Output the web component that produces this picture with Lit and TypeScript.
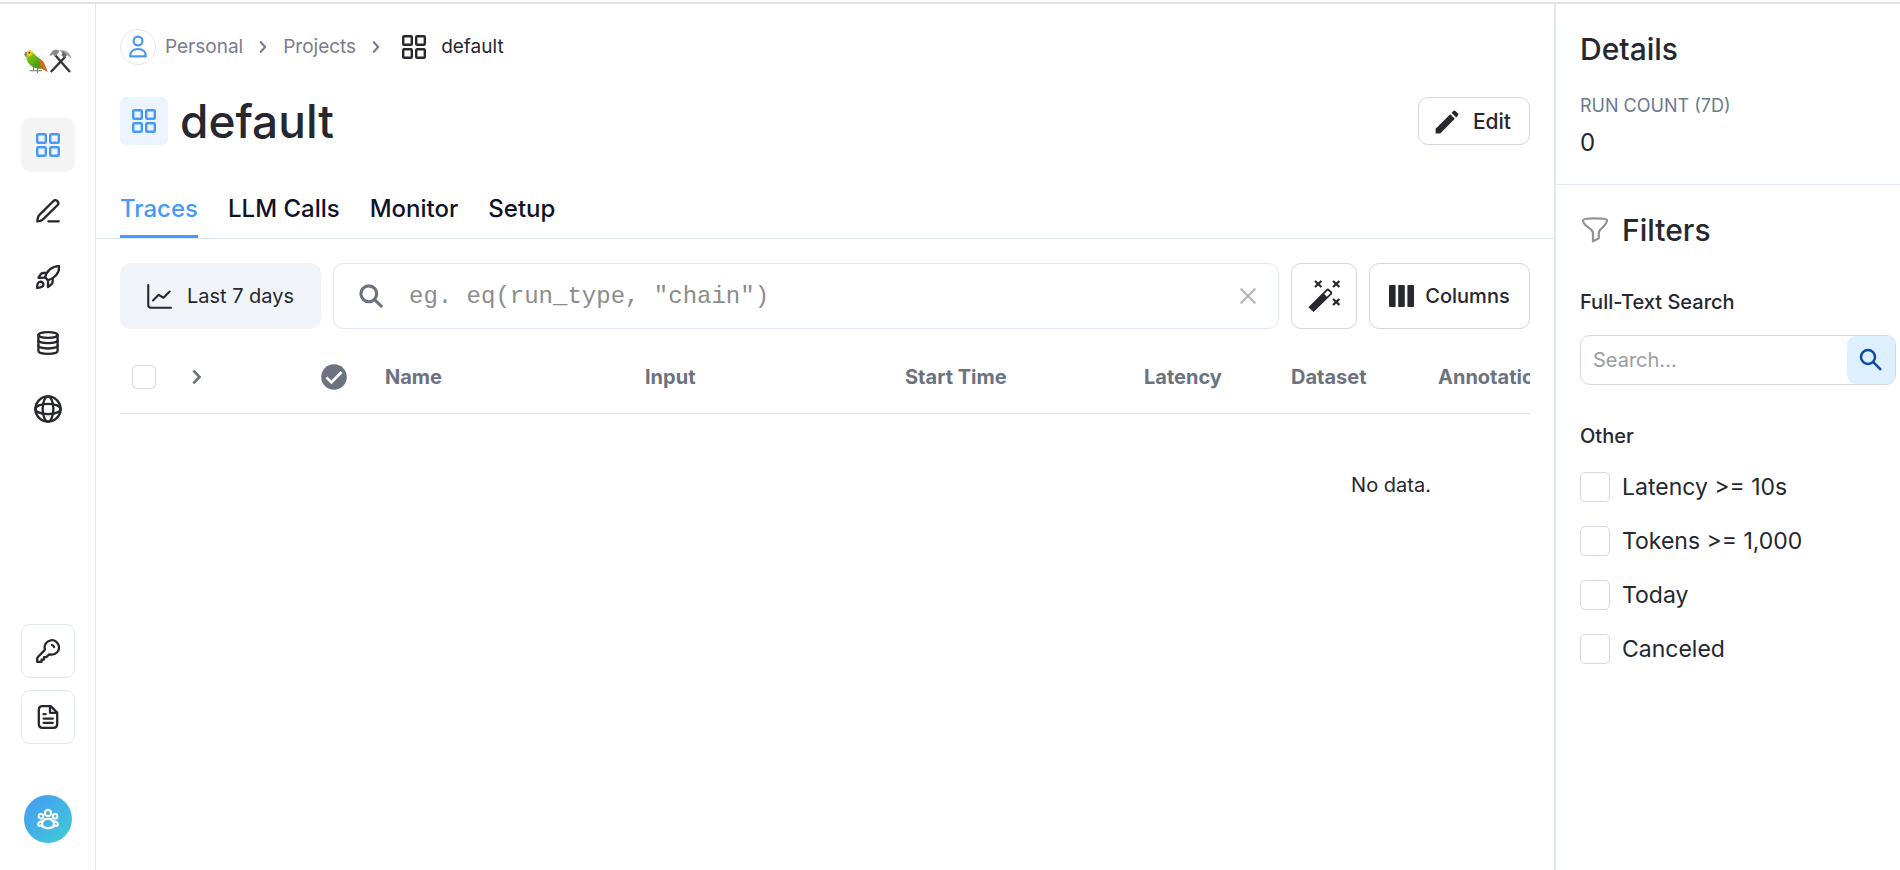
import { LitElement, html, css, svg } from "lit";
import { customElement } from "lit/decorators.js";

const gridIcon = html`<svg width="24" height="24" viewBox="0 0 24 24" fill="none" stroke="currentColor" stroke-width="2.4" aria-hidden="true">
  <rect x="1.2" y="1.2" width="8.6" height="8.6" rx="1"/><rect x="14.2" y="1.2" width="8.6" height="8.6" rx="1"/>
  <rect x="1.2" y="14.2" width="8.6" height="8.6" rx="1"/><rect x="14.2" y="14.2" width="8.6" height="8.6" rx="1"/></svg>`;

const lineIcon = (body: unknown, size = 24, width = 2.3) => html`<svg width=${size} height=${size} viewBox="0 0 24 24" fill="none"
  stroke="currentColor" stroke-width=${width} stroke-linecap="round" stroke-linejoin="round" aria-hidden="true">${body}</svg>`;

const penIcon = lineIcon(svg`<path d="M17.2 2.200a2.900 2.900 0 0 1 4.200 4.100L7.800 19.600Q6.200 21.200 4.200 21.800L1.300 22.400 1.800 19Q2.200 17 3.700 15.600Z"/><path d="M12.400 22.300h10.400"/>`);
const rocketIcon = lineIcon(svg`<path d="M9.2 12.4C10.4 6.4 16 .9 23.200 1.200 23.6 8.6 17.6 14 12 15.2Z"/>
  <path d="M10.8 8H7Q5.5 8 4.6 9.3L2.400 12.8 9.2 12.6"/><path d="M16.6 13.2v3.9q0 1.4-1.2 2.3L12 22V15.2"/>
  <path d="M1.2 22.900C1 19.4 2 16.8 4.4 16.7c2 0 3.2 1.4 3 3.1C7.200 22 4.600 22.600 1.200 22.900Z"/>`);
const databaseIcon = lineIcon(svg`<ellipse cx="12" cy="4" rx="9.600" ry="2.800"/><path d="M2.400 4v15.900c0 1.700 4.300 2.900 9.600 2.900s9.600-1.200 9.600-2.900V4"/>
  <path d="M2.400 9.300c0 1.700 4.300 2.900 9.600 2.900s9.600-1.200 9.600-2.900M2.400 14.600c0 1.700 4.300 2.900 9.600 2.900s9.600-1.200 9.600-2.900"/>`);
const globeIcon = lineIcon(svg`<circle cx="12" cy="12" r="10.800"/><ellipse cx="12" cy="12" rx="4.600" ry="10.800"/><path d="M1.200 12c0-2.600 4.800-4.400 10.800-4.400S22.800 9.400 22.800 12 18 16.400 12 16.400 1.200 14.600 1.200 12Z"/>`, 28, 2);
const keyIcon = lineIcon(svg`<path d="M16 6a2.800 2.800 0 0 1 2 2"/><path d="M15.800 15.600a7.200 7.200 0 1 0-7-5.600c.1.600 0 1-.4 1.400L1.900 18q-.7.800-.7 1.800v3h4.400v-2.200H8v-2.400h2.300l2-2c.4-.4.900-.6 1.500-.7q1 .1 2 .1Z"/>`);
const fileIcon = lineIcon(svg`<path d="M14.600 1.200H6.400Q2.800 1.200 2.800 4.800v14.400Q2.800 22.800 6.400 22.800h11.200q3.600 0 3.600-3.600V7.600Z"/><path d="M14 1.400v6.400h6.800M7.600 9.200h2M7.600 13.600h9.200M7.600 17.800h9.200"/>`);
const groupIcon = lineIcon(svg`<circle cx="12" cy="5.400" r="3.400"/><circle cx="4.300" cy="9" r="2.500"/><circle cx="19.700" cy="9" r="2.500"/>
  <path d="M6.200 20.400c-2.200-4.600 1.400-8.800 5.800-8.800s8 4.200 5.800 8.800c-3.400 1.800-8.200 1.800-11.600 0ZM6.200 19.200H1.600c-1-2.600.8-4.600 3.800-4.600M17.800 19.200h4.600c1-2.600-.8-4.600-3.800-4.600"/>`, 22);
const userIcon = lineIcon(svg`<circle cx="12" cy="6" r="4.400"/><path d="M4.200 21.400c0-4.800 3.200-7.400 7.800-7.400s7.800 2.600 7.800 7.400Z"/>`, 24, 2.200);
const chevron = lineIcon(svg`<path d="m9.400 6.200 5.200 5.800-5.200 5.800"/>`, 20, 2.600);
const expandIcon = html`<svg width="10" height="16" viewBox="0 0 10 16" fill="none" stroke="currentColor" stroke-width="2.600" aria-hidden="true"><path d="m1.400 1.600 6.200 6.400-6.200 6.400"/></svg>`;
const chartIcon = lineIcon(svg`<path d="M1.200 1v19.200q0 2.600 2.600 2.600H23"/><path d="m5.800 15.800 5.400-5.400 4.600 2.800 6-6"/>`, 25, 2);
const searchIcon = lineIcon(svg`<circle cx="9.800" cy="9.800" r="7.900"/><path d="m15.600 15.600 6.600 6.600"/>`, 24, 3.100);
const closeIcon = lineIcon(svg`<path d="m4 4 16 16M20 4 4 20"/>`, 20, 2.800);
const pencilIcon = html`<svg width="24" height="24" viewBox="0 0 24 24" fill="currentColor" aria-hidden="true"><path d="M.6 18.800 15.200 4.200l4.600 4.600L5.200 23.400H.6ZM16.600 2.800 18.400 1q1-.9 2 0l2.600 2.600q.9 1 0 2l-1.800 1.800Z"/></svg>`;
const wandIcon = html`<svg width="32" height="32" viewBox="0 0 32 32" fill="none" stroke="currentColor" aria-hidden="true">
  <path d="M.4 27.200 18.600 9q1.200-1 2.400 0l2.800 2.800q1 1.200 0 2.400L5.600 32Z" fill="currentColor" stroke="none"/><path d="m19.800 10.400 2.700 2.700-3.600 3.600-2.700-2.700Z" fill="#fff" stroke="none"/>
  <path stroke-width="2.200" d="m7 1 6.400 6M13.400 1 7 7M25 1l6.400 6M31.400 1 25 7M25 19l6.400 6M31.400 19 25 25"/></svg>`;
const columnsIcon = html`<svg width="25" height="22" viewBox="0 0 25 22" fill="currentColor" aria-hidden="true"><rect width="6.600" height="22" rx="1"/><rect x="9.200" width="6.600" height="22" rx="1"/><rect x="18.400" width="6.600" height="22" rx="1"/></svg>`;
const checkIcon = html`<svg width="26" height="26" viewBox="0 0 26 26" aria-hidden="true"><circle cx="13" cy="13" r="12.800" fill="currentColor"/><path d="m5.400 13.400 5 5L20.600 8" fill="none" stroke="#fff" stroke-width="2.700"/></svg>`;
const funnelIcon = html`<svg width="28" height="26" viewBox="0 0 28 26" fill="none" stroke="currentColor" stroke-width="2.200" stroke-linejoin="round" aria-hidden="true"><path d="M3 3.200Q3 1.400 15 1.400t12 1.800c0 2-.8 3.400-2.400 5l-4 4.200q-1.800 1.800-1.800 3.600v5.200L13 24.400V16.200q0-1.800-1.800-3.600L5.400 8.200Q3 6 3 3.200Z"/></svg>`;
const lensIcon = html`<svg width="24" height="24" viewBox="0 0 24 24" fill="none" stroke="currentColor" stroke-width="2.500" aria-hidden="true"><circle cx="9" cy="9" r="7"/><path d="m14 13.800 8 8"/></svg>`;
const logo = html`<svg width="48" height="26" viewBox="0 0 48 26" role="img" aria-label="Parrot and tools">
  <defs><linearGradient id="body" x1="0" y1="0" x2="1" y2="1"><stop offset=".2" stop-color="#7fc81b"/><stop offset=".6" stop-color="#4d9c16"/><stop offset="1" stop-color="#e2571b"/></linearGradient></defs>
  <path d="M5.500 21.800h12.500M9.500 18v3.800M13.500 19v5" stroke="#777" stroke-width="1.100"/>
  <path d="M1.800 5C3 .6 8 .4 9.500 4c1 2.600 10 7 11.500 12.500l2.500 6.500-5.500-3.200C11 20.400 4.500 16.500 2.800 11Z" fill="url(#body)"/>
  <path d="M15 9.500c3.500 1.800 5.500 4 6 7.500l2.800 5.800-4.600-3.800c-2.600-1.400-4.200-4.800-4.200-9.500Z" fill="#dd681d"/>
  <path d="M2 5C3 .4 8 .2 9 4 8 7 5 8 3 7Z" fill="#f5cd16"/><path d="M2.600 2.800C.2 3.200-.2 6 1.200 8l2-2Z" fill="#8b8672"/><circle cx="5.400" cy="3.800" r=".9" fill="#333"/>
  <path d="M26.800 23 41.500 7.500M46 23 31.500 6.500" stroke="#35353a" stroke-width="2.400"/>
  <path d="M25.600 6.400C27 3.400 29.500.8 32 .6l3.400 1.200-1.600 3-3 3-1.800-2.600-2 1.600Z" fill="#85898e"/><path d="M36 1.200C41 .2 46 3.200 47.800 10 44.500 6.400 41 5 37.500 4Z" fill="#a5a9ae"/><path d="m39.200 2 4 4-3 3-2.800-2.800Z" fill="#6b6e73"/></svg>`;

@customElement("app-root")
export class AppRoot extends LitElement {
  static styles = css`
    :host { display: flex; flex-direction: column; min-height: 100vh; box-sizing: border-box; padding-top: 2px; background: #fff; color: #26272f; font-family: Inter, "Liberation Sans", sans-serif; font-size: 20px; line-height: 28px; }
    * { box-sizing: border-box; }
    h1, h2, h3, p, dl, dd { margin: 0; }
    h1, h2, h3 { font-weight: 500; }
    svg { display: block; flex: none; }
    a { color: inherit; text-decoration: none; }
    button { font: inherit; color: inherit; background: #fff; border: 1px solid #d6d7de; padding: 0; cursor: pointer; }
    .shell { flex: 1; display: flex; border-top: 2px solid #e2e2e2; }
    .rail { flex: none; width: 96px; border-right: 1px solid #e2e5f0; padding: 45px 0 27px; display: flex; flex-direction: column; align-items: center; gap: 12px; }
    .logo { display: block; margin-bottom: 31px; }
    .tile { width: 54px; height: 54px; border-radius: 9px; display: grid; place-items: center; }
    .tile.on { background: #f4f4f4; color: #4799f7; }
    .tile.boxed { border: 1px solid #e2e8f0; }
    .spacer { flex: 1; }
    .avatar { width: 48px; height: 48px; border: 0; border-radius: 50%; margin-top: 39px; display: grid; place-items: center; color: #fff; background: linear-gradient(135deg, #449af6, #41ccd4); }
    .main { flex: 1; min-width: 0; }
    .crumbs { display: flex; align-items: center; padding: 24px 24px 0; height: 61px; font-size: 19px; color: #7b7b91; }
    .crumbs a { display: flex; align-items: center; }
    .crumbs .person { width: 36px; height: 36px; border: 1px solid #e2e8f0; border-radius: 50%; display: grid; place-items: center; margin-right: 9px; color: #4799f7; }
    .crumbs .sep { margin: 0 10px; }
    .crumbs .here { display: flex; align-items: center; gap: 15px; margin-left: 6px; color: #26272f; }
    .title { display: flex; align-items: center; gap: 12px; padding: 0 24px; margin-top: 32px; }
    .title h1 { flex: 1; font-size: 46px; line-height: 48px; }
    .badge { width: 48px; height: 48px; border-radius: 6px; display: grid; place-items: center; background: #ebf4ff; color: #4799f7; }
    .edit { display: flex; align-items: center; gap: 14px; height: 48px; padding: 1px 18px 0 16px; border-radius: 10px; font-size: 21px; font-weight: 500; }
    .tabs { display: flex; gap: 30px; padding: 0 24px; margin-top: 46px; border-bottom: 1px solid #e2e8f0; font-size: 24px; line-height: 32px; font-weight: 500; color: #101226; }
    .tabs a { height: 47px; padding-top: 2px; border-bottom: 3px solid transparent; }
    .tabs .on { color: #4799f7; border-color: #4799f7; }
    .tools { display: flex; gap: 12px; padding: 24px 24px 0; }
    .tools button { height: 66px; border-radius: 10px; display: flex; align-items: center; justify-content: center; }
    .tools .range { width: 201px; gap: 15px; border: 0; background: #f0f4f9; }
    .query { flex: 1; min-width: 0; display: flex; align-items: center; border: 1px solid #e2e8f0; border-radius: 10px; padding: 0 20px 0 25px; color: #6b7280; }
    .query input { flex: 1; min-width: 0; border: 0; outline: 0; background: none; margin-left: 26px; padding: 0; font: 24px "Liberation Mono", monospace; }
    .query input::placeholder { color: #8c8c8c; opacity: 1; }
    .tools .clear { height: 24px; border: 0; background: none; color: #b9b8c6; }
    .tools .wand { width: 66px; }
    .tools .cols { width: 161px; gap: 11px; font-weight: 500; }
    .list { margin: 12px 24px 0; overflow: hidden; }
    table { table-layout: fixed; width: 2542px; border-collapse: separate; border-spacing: 0; }
    th { height: 73px; padding: 0 12px; text-align: left; font-weight: 700; color: #6b7280; border-bottom: 1px solid #e2e5ee; }
    td { height: 142px; text-align: center; font-size: 20px; }
    .c-check { width: 60px; } .c-open { width: 129px; } .c-status { width: 64px; } .c-wide { width: 260px; }
    .c-start { width: 239px; } .c-num { width: 147px; }
    th button { display: block; border: 0; }
    input[type="checkbox"] { appearance: none; display: block; flex: none; margin: 0; border: 1px solid #d8d9e0; border-radius: 5px; background: #fff; width: 30px; height: 30px; }
    th input[type="checkbox"] { width: 24px; height: 24px; }
    .side { flex: none; width: 346px; border-left: 2px solid #e2e8f0; }
    .details { padding: 25px 24px; border-bottom: 1px solid #e2e8f0; height: 181px; }
    h2 { font-size: 30px; line-height: 40px; }
    dl { margin-top: 23px; }
    dt { font-size: 18px; line-height: 28px; color: #697a91; }
    dd { font-size: 24px; line-height: 32px; margin-top: 7px; }
    .filters { padding: 25px 4px 24px 24px; }
    .filters h2 { display: flex; align-items: center; gap: 14px; }
    .filters h2 svg { color: #929297; }
    h3 { font-size: 20px; line-height: 28px; }
    .field { display: block; margin-top: 38px; font-weight: 500; }
    .search { display: flex; margin-top: 19px; height: 50px; border: 1px solid #d6d7de; border-radius: 10px; }
    .search input { flex: 1; min-width: 0; border: 0; outline: 0; background: none; padding: 0 12px; font: inherit; }
    .search input::placeholder { color: #9c9ca0; opacity: 1; }
    .search button { width: 48px; border: 0; border-radius: 9px; background: #dcf0ff; color: #0b4aa8; display: grid; place-items: center; }
    .other { margin-top: 37px; }
    .opts { display: flex; flex-direction: column; gap: 24px; margin-top: 22px; }
    .opts label { display: flex; align-items: center; gap: 12px; height: 30px; font-size: 23px; }
  `;

  render() {
    return html`<div class="shell">
      <nav class="rail" aria-label="Primary">
        <a class="logo" href="#">${logo}</a>
        <a class="tile on" href="#" aria-label="Projects">${gridIcon}</a>
        <a class="tile" href="#" aria-label="Prompts">${penIcon}</a>
        <a class="tile" href="#" aria-label="Deployments">${rocketIcon}</a>
        <a class="tile" href="#" aria-label="Datasets">${databaseIcon}</a>
        <a class="tile" href="#" aria-label="Hub">${globeIcon}</a>
        <span class="spacer"></span>
        <a class="tile boxed" href="#" aria-label="API keys">${keyIcon}</a>
        <a class="tile boxed" href="#" aria-label="Documentation">${fileIcon}</a>
        <button class="avatar" aria-label="Account">${groupIcon}</button>
      </nav>
      <main class="main">
        <nav class="crumbs" aria-label="Breadcrumb">
          <a href="#"><span class="person">${userIcon}</span>Personal</a>
          <span class="sep">${chevron}</span><a href="#">Projects</a><span class="sep">${chevron}</span>
          <span class="here">${gridIcon}<span>default</span></span>
        </nav>
        <header class="title">
          <span class="badge">${gridIcon}</span><h1>default</h1>
          <button class="edit">${pencilIcon}Edit</button>
        </header>
        <nav class="tabs" aria-label="Project views">
          <a class="on" href="#">Traces</a><a href="#">LLM Calls</a><a href="#">Monitor</a><a href="#">Setup</a>
        </nav>
        <div class="tools">
          <button class="range">${chartIcon}<span>Last 7 days</span></button>
          <div class="query">${searchIcon}<input type="text" aria-label="Filter query" placeholder='eg. eq(run_type, "chain")'>
            <button class="clear" aria-label="Clear">${closeIcon}</button></div>
          <button class="wand" aria-label="Generate filter">${wandIcon}</button>
          <button class="cols">${columnsIcon}<span>Columns</span></button>
        </div>
        <div class="list"><table>
          <colgroup><col class="c-check"><col class="c-open"><col class="c-status"><col class="c-wide"><col class="c-wide"><col class="c-start"><col class="c-num"><col class="c-num"><col></colgroup>
          <thead><tr>
            <th><input type="checkbox" aria-label="Select all"></th>
            <th><button aria-label="Expand all">${expandIcon}</button></th>
            <th>${checkIcon}</th>
            <th>Name</th><th>Input</th><th>Start Time</th><th>Latency</th><th>Dataset</th><th>Annotation</th>
          </tr></thead>
          <tbody><tr><td colspan="9">No data.</td></tr></tbody>
        </table></div>
      </main>
      <aside class="side">
        <section class="details">
          <h2>Details</h2>
          <dl><dt>RUN COUNT (7D)</dt><dd>0</dd></dl>
        </section>
        <section class="filters">
          <h2>${funnelIcon}Filters</h2>
          <label class="field" for="full-text">Full-Text Search</label>
          <div class="search"><input id="full-text" type="text" placeholder="Search..."><button aria-label="Search">${lensIcon}</button></div>
          <h3 class="other">Other</h3>
          <div class="opts">
            ${["Latency >= 10s", "Tokens >= 1,000", "Today", "Canceled"].map((name) => html`<label><input type="checkbox">${name}</label>`)}
          </div>
        </section>
      </aside>
    </div>`;
  }
}
